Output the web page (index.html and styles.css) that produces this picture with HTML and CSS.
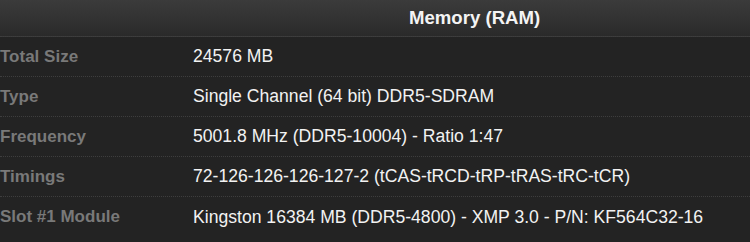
FILE: index.html
```html
<!DOCTYPE html>
<html>
<head>
<meta charset="utf-8">
<link rel="stylesheet" href="styles.css">
</head>
<body>
<div class="panel">
  <div class="head"><span class="title">Memory (RAM)</span></div>
  <div class="row"><div class="label">Total Size</div><div class="value">24576 MB</div></div>
  <div class="row"><div class="label">Type</div><div class="value">Single Channel (64 bit) DDR5-SDRAM</div></div>
  <div class="row"><div class="label">Frequency</div><div class="value">5001.8 MHz (DDR5-10004) - Ratio 1:47</div></div>
  <div class="row"><div class="label">Timings</div><div class="value">72-126-126-126-127-2 (tCAS-tRCD-tRP-tRAS-tRC-tCR)</div></div>
  <div class="row last"><div class="label">Slot #1 Module</div><div class="value">Kingston 16384 MB (DDR5-4800) - XMP 3.0 - P/N: KF564C32-16</div></div>
</div>
</body>
</html>
```
FILE: styles.css
```css
html, body {
  margin: 0;
  padding: 0;
  background: #232323;
}
.panel {
  width: 750px;
  height: 242px;
  overflow: hidden;
  font-family: "Liberation Sans", Arial, sans-serif;
  font-size: 17px;
}
.head {
  height: 37px;
  background: linear-gradient(#3b3b3b, #2a2a2a);
  border-bottom: 1px dotted #3e3e3e;
  display: flex;
  align-items: center;
  padding-left: 409px;
  box-sizing: border-box;
}
.title {
  color: #f4f4f4;
  font-weight: bold;
  font-size: 18.6px;
}
.row {
  height: 40px;
  box-sizing: border-box;
  border-bottom: 1px dotted #3e3e3e;
  display: flex;
  align-items: center;
}
.row.last { border-bottom: none; }
.label {
  width: 193px;
  flex: none;
  color: #797979;
  font-weight: bold;
}
.value {
  color: #f2f2f2;
  font-size: 17.6px;
}
```
